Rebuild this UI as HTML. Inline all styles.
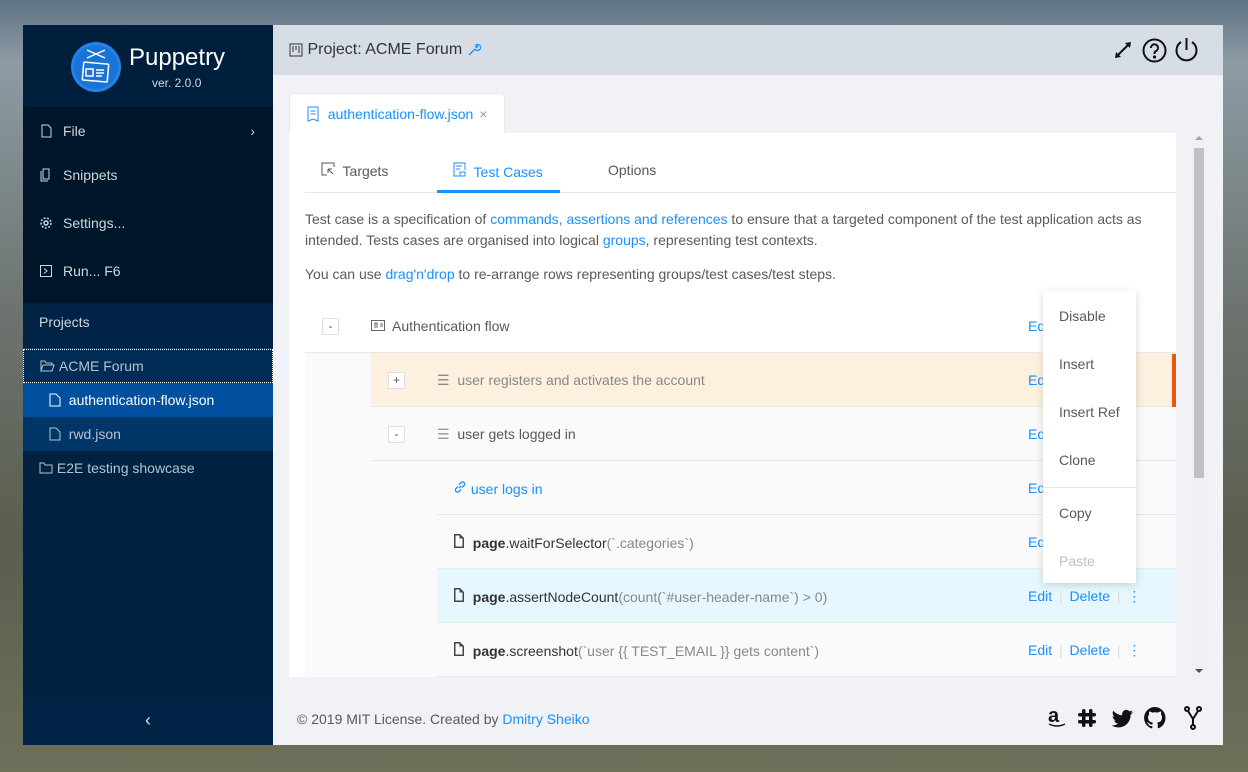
<!DOCTYPE html>
<html><head><meta charset="utf-8"><style>
*{box-sizing:border-box;margin:0;padding:0}
body{width:1248px;height:772px;overflow:hidden;font-family:"Liberation Sans",sans-serif;font-size:14px;color:#595959;background:linear-gradient(180deg,#5f7384 0%,#8d9ba4 8%,#6d7470 40%,#5a5e4e 70%,#6e705a 100%);position:relative}
.win{position:absolute;left:23px;top:25px;width:1200px;height:720px;background:#f0f2f5}
.side{position:absolute;left:0;top:0;width:250px;height:720px;background:#002140}
.logo{height:82px;background:#001f3d;position:relative}
.menu{background:#001529;height:196px;padding-top:0}
.mi{height:48px;display:flex;align-items:center;padding-left:16px;color:#d0d6dd;font-size:14px}
.mi svg{margin-right:10px}
.ph{height:46px;line-height:38px;padding-left:16px;color:#d0d6dd;background:#002346;border-bottom:1px solid #1d3a5a}
.pr{height:34px;display:flex;align-items:center;color:#b8c2cc}
.hdr{position:absolute;left:250px;top:0;width:950px;height:50px;background:#d7dde5;display:flex;align-items:center;padding-left:16px;color:#333;font-size:16px}
a,.bl{color:#1890ff;text-decoration:none}
.panel{position:absolute;left:266px;top:108px;width:887px;height:544px;background:#fff;overflow:hidden}
.row{position:absolute;height:54px;border-bottom:1px solid #e8e8e8;display:flex;align-items:center}
.tog{position:absolute;width:17px;height:17px;border:1px solid #e0e0e0;background:#fff;font-size:12px;line-height:14px;text-align:center;color:#555}
.ed{position:absolute;left:739px;color:#1890ff}
.b{color:#333;font-weight:bold}
</style></head><body>
<div class="win">
 <div class="side">
  <div class="logo">
   <svg style="position:absolute;left:48px;top:17px" width="50" height="50" viewBox="0 0 50 50"><circle cx="25" cy="25" r="25" fill="#2483e8"/><circle cx="25" cy="25" r="22" fill="#1a74d6"/><g stroke="#fff" stroke-width="1.5" fill="none"><path d="M16 8l18 8M34 8l-18 8"/><rect x="12" y="21" width="25" height="18" rx="1" transform="rotate(5 24 30)"/><rect x="15" y="27" width="7" height="7"/><path d="M25 28h8M25 31h8M25 34h6"/></g></svg>
   <div style="position:absolute;left:106px;top:19px;color:#fff;font-size:24px">Puppetry</div>
   <div style="position:absolute;left:129px;top:51px;color:#d0d6dd;font-size:12px">ver. 2.0.0</div>
  </div>
  <div class="menu">
   <div class="mi" style="height:48px"><svg width="14" height="14" viewBox="0 0 14 14" fill="none" stroke="#d0d6dd"><path d="M3 1h6l3 3v9H3z"/></svg>File<span style="margin-left:auto;margin-right:18px">›</span></div>
   <div class="mi" style="height:40px"><svg width="14" height="14" viewBox="0 0 14 14" fill="none" stroke="#d0d6dd"><path d="M4 1h6v10H4zM2 3v10h7"/></svg>Snippets</div>
   <div class="mi" style="margin-top:4px"><svg width="14" height="14" viewBox="0 0 14 14" fill="none" stroke="#d0d6dd" stroke-width="1.5"><circle cx="7" cy="7" r="2"/><circle cx="7" cy="7" r="5" stroke-dasharray="2 1.5"/></svg>Settings...</div>
   <div class="mi"><svg width="14" height="14" viewBox="0 0 14 14" fill="none" stroke="#d0d6dd"><rect x="1.5" y="1.5" width="11" height="11"/><path d="M5 4.5l3 2.5-3 2.5"/></svg>Run... F6</div>
  </div>
  <div class="ph">Projects</div>
  <div class="pr" style="background:#002c55;border:1px dotted #fff;padding-left:16px"><svg width="15" height="12" viewBox="0 0 15 12" fill="none" stroke="#b8c2cc"><path d="M1 11V1h4l1 2h6v2M1 11l2-6h11l-2 6z"/></svg>&nbsp;ACME Forum</div>
  <div class="pr" style="background:#0050a0;color:#fff;padding-left:26px"><svg width="12" height="14" viewBox="0 0 12 14" fill="none" stroke="#fff"><path d="M1 1h6l4 4v8H1z"/></svg>&nbsp;&nbsp;authentication-flow.json</div>
  <div class="pr" style="background:#003568;padding-left:26px"><svg width="12" height="14" viewBox="0 0 12 14" fill="none" stroke="#b8c2cc"><path d="M1 1h6l4 4v8H1z"/></svg>&nbsp;&nbsp;rwd.json</div>
  <div class="pr" style="padding-left:16px"><svg width="14" height="12" viewBox="0 0 14 12" fill="none" stroke="#b8c2cc"><path d="M1 1h4l1 2h7v8H1z"/></svg>&nbsp;E2E testing showcase</div>
  <div style="position:absolute;bottom:0;left:0;width:250px;height:50px;background:#002346;color:#ddd;text-align:center;line-height:50px;font-size:18px">‹</div>
 </div>
 <div class="hdr"><svg width="14" height="14" viewBox="0 0 14 14" fill="none" stroke="#333"><rect x="1" y="1" width="12" height="12"/><path d="M4 3v6M7 3v4M10 3v7"/></svg>&nbsp;Project: ACME Forum&nbsp;<svg width="14" height="14" viewBox="0 0 14 14" fill="none" stroke="#1890ff" stroke-width="1.3"><path d="M2 12l6-6M8 6a3 3 0 1 0 1-4l1.5 1.5-1 1L8 3.5"/></svg>
  <svg style="position:absolute;left:840px;top:15px" width="20" height="20" viewBox="0 0 20 20" stroke="#111" stroke-width="2" fill="#111"><path d="M4 16L16 4"/><path d="M2 18l1-6 5 5zM18 2l-6 1 5 5z" stroke="none"/></svg>
  <svg style="position:absolute;left:869px;top:13px" width="25" height="25" viewBox="0 0 25 25" fill="none" stroke="#111" stroke-width="2"><circle cx="12.5" cy="12.5" r="11"/><path d="M9 10a3.5 3.5 0 1 1 5 3c-1.5.8-1.5 1.5-1.5 3"/><circle cx="12.5" cy="19" r=".6" fill="#111"/></svg>
  <svg style="position:absolute;left:901px;top:12px" width="25" height="26" viewBox="0 0 25 26" fill="none" stroke="#111" stroke-width="2"><path d="M7 5a10 10 0 1 0 11 0M12.5 1v12"/></svg>
 </div>
 <div style="position:absolute;left:266px;top:68px;width:216px;height:40px;background:#fff;border:1px solid #e8e8e8;border-bottom:none;border-radius:4px 4px 0 0;display:flex;align-items:center;padding-left:16px;color:#1890ff"><svg width="14" height="16" viewBox="0 0 14 16" fill="none" stroke="#1890ff"><path d="M2 1h10v14l-5-2-5 2z"/><path d="M4.5 5h5M4.5 8h5"/></svg>&nbsp;&nbsp;authentication-flow.json <span style="color:#999;margin-left:6px">×</span></div>
 <div class="panel">
  <div style="position:absolute;left:16px;top:0;width:871px;height:60px;border-bottom:1px solid #e8e8e8"></div>
  <div style="position:absolute;left:32px;top:29px;color:#595959"><svg width="14" height="14" viewBox="0 0 14 14" fill="none" stroke="#555"><path d="M13 5V1H1v12h5"/><path d="M7 7l5 5M7 7h4M7 7v4"/></svg>&nbsp; Targets</div>
  <div style="position:absolute;left:164px;top:29px;color:#1890ff"><svg width="13" height="15" viewBox="0 0 13 15" fill="none" stroke="#1890ff"><path d="M6 14H1V1h11v7"/><path d="M3 4h6M3 7h4"/><rect x="7" y="10" width="5" height="4"/></svg>&nbsp; Test Cases</div>
  <div style="position:absolute;left:148px;top:57px;width:123px;height:3px;background:#1890ff"></div>
  <div style="position:absolute;left:319px;top:29px">Options</div>
  <div style="position:absolute;left:16px;top:76px;width:860px;line-height:21px">Test case is a specification of <a>commands, assertions and references</a> to ensure that a targeted component of the test application acts as intended. Tests cases are organised into logical <a>groups</a>, representing test contexts.</div>
  <div style="position:absolute;left:16px;top:133px">You can use <a>drag'n'drop</a> to re-arrange rows representing groups/test cases/test steps.</div>
  <div class="row" style="left:16px;top:166px;width:871px;background:#fff"></div>
  <div class="tog" style="left:33px;top:185px">-</div>
  <div style="position:absolute;left:82px;top:185px;color:#595959"><svg width="14" height="11" viewBox="0 0 14 11" fill="none" stroke="#666"><rect x=".5" y=".5" width="13" height="10"/><path d="M3 7h4M9 4h3M9 6h3"/><circle cx="5" cy="4" r="1.3"/></svg>&nbsp; Authentication flow</div>
  <div style="position:absolute;left:16px;top:220px;width:66px;height:330px;background:#fafafa"></div>
  <div class="row" style="left:82px;top:220px;width:805px;background:#fdf0df"></div>
  <div style="position:absolute;left:883px;top:221px;width:4px;height:53px;background:#e8590c"></div>
  <div class="tog" style="left:99px;top:239px">+</div>
  <div style="position:absolute;left:148px;top:239px;color:#888">☰&nbsp; user registers and activates the account</div>
  <div class="row" style="left:82px;top:274px;width:805px;background:#fafafa"></div>
  <div class="tog" style="left:99px;top:293px">-</div>
  <div style="position:absolute;left:148px;top:293px;color:#595959"><span style="color:#999">☰</span>&nbsp; user gets logged in</div>
  <div style="position:absolute;left:82px;top:328px;width:66px;height:230px;background:#fafafa"></div>
  <div class="row" style="left:148px;top:328px;width:739px;background:#fafafa"></div>
  <div style="position:absolute;left:164px;top:347px;color:#1890ff"><svg width="14" height="14" viewBox="0 0 14 14" fill="none" stroke="#1890ff" stroke-width="1.3"><path d="M6 8l2-2M5 6.5L3 8.5a2.1 2.1 0 0 0 3 3L8 9.5M9 7.5l2-2a2.1 2.1 0 0 0-3-3L6 4.5"/></svg> user logs in</div>
  <div class="row" style="left:148px;top:382px;width:739px;background:#fafafa"></div>
  <div style="position:absolute;left:164px;top:401px"><svg width="12" height="14" viewBox="0 0 12 14" fill="#444"><path d="M1 0h6l4 4v10H1z"/><path d="M2.5 1.5h4v3h3v8h-7z" fill="#fafafa"/></svg>&nbsp; <span class="b">page</span><span style="color:#333">.waitForSelector</span><span style="color:#888">(`.categories`)</span></div>
  <div class="row" style="left:148px;top:436px;width:739px;background:#e6f7ff"></div>
  <div style="position:absolute;left:164px;top:455px"><svg width="12" height="14" viewBox="0 0 12 14" fill="#444"><path d="M1 0h6l4 4v10H1z"/><path d="M2.5 1.5h4v3h3v8h-7z" fill="#e6f7ff"/></svg>&nbsp; <span class="b">page</span><span style="color:#333">.assertNodeCount</span><span style="color:#888">(count(`#user-header-name`) &gt; 0)</span></div>
  <div class="row" style="left:148px;top:490px;width:739px;background:#fafafa"></div>
  <div style="position:absolute;left:164px;top:509px"><svg width="12" height="14" viewBox="0 0 12 14" fill="#444"><path d="M1 0h6l4 4v10H1z"/><path d="M2.5 1.5h4v3h3v8h-7z" fill="#fafafa"/></svg>&nbsp; <span class="b">page</span><span style="color:#333">.screenshot</span><span style="color:#888">(`user {{ TEST_EMAIL }} gets content`)</span></div>
  <div class="ed" style="top:185px">Edit</div><div class="ed" style="top:239px">Edit</div><div class="ed" style="top:293px">Edit</div><div class="ed" style="top:347px">Edit</div><div class="ed" style="top:401px">Edit</div>
  <div class="ed" style="top:455px">Edit <span style="color:#ddd;margin:0 3px">|</span> Delete <span style="color:#ddd;margin:0 3px">|</span> ⋮</div>
  <div class="ed" style="top:509px">Edit <span style="color:#ddd;margin:0 3px">|</span> Delete <span style="color:#ddd;margin:0 3px">|</span> ⋮</div>
  <div style="position:absolute;left:754px;top:158px;width:93px;height:292px;background:#fff;box-shadow:0 2px 8px rgba(0,0,0,.15)">
   <div style="position:absolute;left:16px;top:17px">Disable</div>
   <div style="position:absolute;left:16px;top:65px">Insert</div>
   <div style="position:absolute;left:16px;top:113px">Insert Ref</div>
   <div style="position:absolute;left:16px;top:161px">Clone</div>
   <div style="position:absolute;left:0;top:196px;width:93px;height:1px;background:#e8e8e8"></div>
   <div style="position:absolute;left:16px;top:214px">Copy</div>
   <div style="position:absolute;left:16px;top:262px;color:#c0c0c0">Paste</div>
  </div>
 </div>
 <div style="position:absolute;left:1169px;top:108px;width:14px;height:544px;background:#f1f1f1"><div style="position:absolute;left:2px;top:15px;width:10px;height:330px;background:#c1c1c1"></div><div style="position:absolute;left:3px;top:3px;border:4px solid transparent;border-bottom-color:#a3a3a3;border-top:none"></div><div style="position:absolute;left:3px;bottom:4px;border:4px solid transparent;border-top-color:#505050;border-bottom:none"></div></div>
 <div style="position:absolute;left:274px;top:686px;color:#595959">© 2019 MIT License. Created by <a>Dmitry Sheiko</a></div>
 <div style="position:absolute;left:1025px;top:680px;font-size:20px;font-weight:bold;color:#111">a</div>
 <svg style="position:absolute;left:1022px;top:681px" width="178" height="24" viewBox="0 0 178 24">
  <path d="M4 18q8 4 16 0" stroke="#111" stroke-width="1.5" fill="none"/>
  <g fill="#111"><rect x="37" y="3" width="3.5" height="18" rx="1.7"/><rect x="44" y="3" width="3.5" height="18" rx="1.7"/><rect x="33" y="7" width="18" height="3.5" rx="1.7"/><rect x="33" y="14" width="18" height="3.5" rx="1.7"/></g>
  <path fill="#111" d="M88 6c-.8.4-1.6.6-2.5.7.9-.5 1.6-1.4 1.9-2.4-.8.5-1.8.9-2.8 1.1a4.3 4.3 0 0 0-7.4 3.9c-3.6-.2-6.8-1.9-8.9-4.5-1.2 2-.6 4.5 1.3 5.8-.7 0-1.4-.2-2-.5 0 2.1 1.5 3.9 3.5 4.3-.6.2-1.3.2-2 .1.6 1.7 2.2 3 4 3-1.8 1.4-4.1 2.2-6.5 1.9 2 1.3 4.3 2 6.7 2 8 0 12.5-6.7 12.3-12.7.9-.6 1.6-1.4 2.2-2.3z"/>
  <path fill="#111" d="M110 1a11 11 0 0 0-3.5 21.4c.5.1.8-.2.8-.5v-2c-3 .7-3.7-1.4-3.7-1.4-.5-1.3-1.2-1.6-1.2-1.6-1-.7.1-.7.1-.7 1.1.1 1.7 1.1 1.7 1.1 1 1.7 2.6 1.2 3.2.9.1-.7.4-1.2.7-1.5-2.4-.3-5-1.2-5-5.4 0-1.2.4-2.2 1.1-2.9-.1-.3-.5-1.4.1-2.9 0 0 .9-.3 3 1.1a10 10 0 0 1 5.5 0c2.1-1.4 3-1.1 3-1.1.6 1.5.2 2.6.1 2.9.7.8 1.1 1.7 1.1 2.9 0 4.2-2.6 5.1-5 5.4.4.3.8 1 .8 2v3c0 .3.2.6.8.5A11 11 0 0 0 110 1z"/>
  <g stroke="#111" stroke-width="2" fill="none"><circle cx="142" cy="3" r="2"/><circle cx="154" cy="3" r="2"/><circle cx="148" cy="21" r="2"/><path d="M143 5l5 8 5-8M148 13v6"/></g>
 </svg>
</div>
</body></html>
